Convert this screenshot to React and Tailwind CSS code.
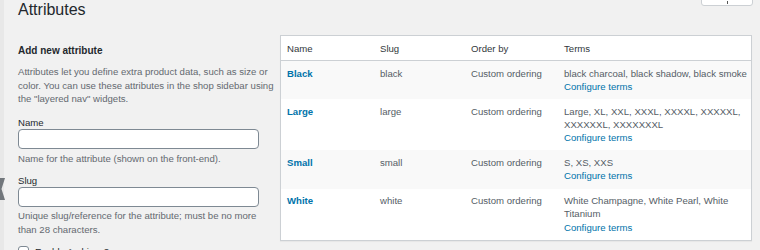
export default function App() {
  const rows = [
    { name: 'Black', slug: 'black', terms: ['black charcoal, black shadow, black smoke'], alt: true },
    { name: 'Large', slug: 'large', terms: ['Large, XL, XXL, XXXL, XXXXL, XXXXXL,', 'XXXXXXL, XXXXXXXL'], alt: false },
    { name: 'Small', slug: 'small', terms: ['S, XS, XXS'], alt: true },
    { name: 'White', slug: 'white', terms: ['White Champagne, White Pearl, White', 'Titanium'], alt: false }
  ]

  return (
    <div className="relative flex w-[760px] h-[250px] overflow-hidden bg-[#f1f1f1] font-['Liberation_Sans',Arial,sans-serif]">
      {/* Sidebar edge */}
      <div className="relative w-[4px] shrink-0 bg-[#e8e8e8]">
        <svg className="absolute left-0 top-[178px]" width="6" height="22" viewBox="0 0 6 22">
          <polygon points="0,0 5,0 1.5,11 5,22 0,22" fill="#72777c" />
        </svg>
      </div>

      {/* Help tab */}
      <div className="absolute right-[7px] top-[-10px] w-[52px] h-[16px] bg-white border border-[#ccd0d4] rounded-[3px]">
        <span className="absolute left-[25px] top-[10px] w-[1px] h-[3px] bg-[#555]"></span>
      </div>

      <div className="pl-[14px]">
        <h1 className="text-[16px] leading-[20px] text-[#23282d] font-normal">Attributes</h1>

        <div className="flex mt-[15px]">
          {/* Add form */}
          <div className="w-[254px] mr-[8px] pt-[9px]">
            <h2 className="text-[10px] leading-[13px] font-bold text-[#23282d]">Add new attribute</h2>
            <p className="mt-[8px] text-[9.6px] leading-[13.5px] text-[#646970] whitespace-nowrap">
              Attributes let you define extra product data, such as size or<br />
              color. You can use these attributes in the shop sidebar using<br />
              the "layered nav" widgets.
            </p>

            <label className="block mt-[11px] text-[9.6px] leading-[11px] text-[#23282d]">Name</label>
            <div className="mt-[1px] w-[241px] h-[20px] bg-white border border-[#7e8993] rounded-[4px]"></div>
            <p className="mt-[3px] text-[9.6px] leading-[13.5px] text-[#646970]">Name for the attribute (shown on the front-end).</p>

            <label className="block mt-[10px] text-[9.6px] leading-[11px] text-[#23282d]">Slug</label>
            <div className="mt-[1px] w-[241px] h-[20px] bg-white border border-[#7e8993] rounded-[4px]"></div>
            <p className="mt-[2px] text-[9.6px] leading-[13.5px] text-[#646970]">
              Unique slug/reference for the attribute; must be no more than 28 characters.
            </p>

            <div className="mt-[10px] flex items-start gap-[6px]">
              <div className="w-[11px] h-[11px] bg-white border border-[#7e8993] rounded-[3px]"></div>
              <span className="text-[9.6px] leading-[11px] text-[#23282d]">Enable Archives?</span>
            </div>
          </div>

          {/* Attribute table */}
          <div className="w-[472px] self-start bg-white border border-[#ccd0d4] shadow-[0_1px_1px_rgba(0,0,0,0.04)]">
            <table className="w-full table-fixed border-collapse text-[9.6px]">
              <colgroup>
                <col className="w-[93px]" />
                <col className="w-[91px]" />
                <col className="w-[93px]" />
                <col />
              </colgroup>
              <thead>
                <tr className="border-b border-[#ccd0d4]">
                  <th className="text-left font-normal text-[#32373c] pl-[6px] py-[5.5px] leading-[13px]">Name</th>
                  <th className="text-left font-normal text-[#32373c] pl-[6px] py-[5.5px] leading-[13px]">Slug</th>
                  <th className="text-left font-normal text-[#32373c] pl-[6px] py-[5.5px] leading-[13px]">Order by</th>
                  <th className="text-left font-normal text-[#32373c] pl-[6px] py-[5.5px] leading-[13px]">Terms</th>
                </tr>
              </thead>
              <tbody>
                {rows.map((row) => (
                  <tr key={row.name} className={row.alt ? 'bg-[#f9f9f9]' : 'bg-white'}>
                    <td className="align-top pl-[6px] pt-[5.5px] pb-[6px] leading-[13.3px] font-bold text-[#0073aa]">{row.name}</td>
                    <td className="align-top pl-[6px] pt-[5.5px] pb-[6px] leading-[13.3px] text-[#555d66]">{row.slug}</td>
                    <td className="align-top pl-[6px] pt-[5.5px] pb-[6px] leading-[13.3px] text-[#555d66]">Custom ordering</td>
                    <td className="align-top pl-[6px] pt-[5.5px] pb-[6px] leading-[13.3px] text-[#555d66]">
                      {row.terms.map((line) => (
                        <div key={line} className="whitespace-nowrap">{line}</div>
                      ))}
                      <div className="text-[#0073aa]">Configure terms</div>
                    </td>
                  </tr>
                ))}
              </tbody>
            </table>
          </div>
        </div>
      </div>
    </div>
  )
}
